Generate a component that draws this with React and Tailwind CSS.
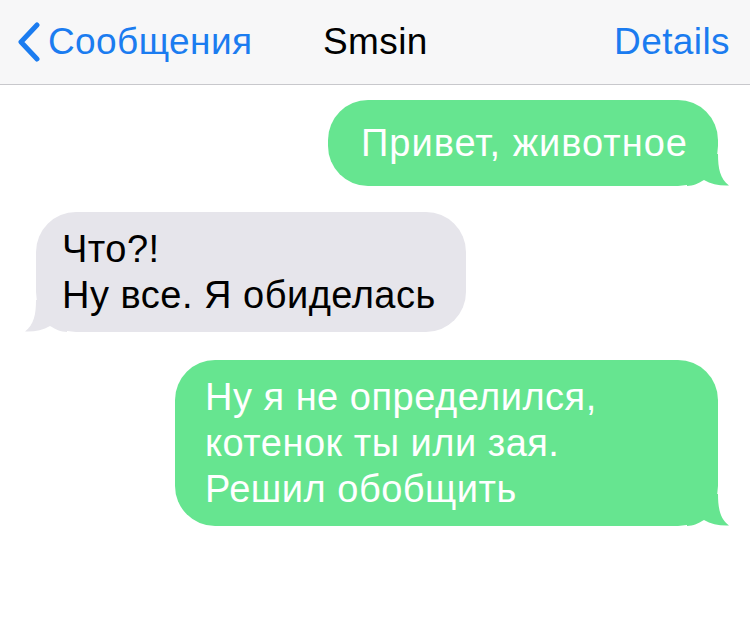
import * as React from "react";

const GREEN = "#66e590";
const GRAY = "#e6e5eb";

// tail of a bubble, drawn under the text at its bottom corner
const Tail = ({ side, color }) => (
  <svg
    width="42"
    height="32"
    viewBox="0 0 42 32"
    className={side === "right" ? "absolute -right-[11px] bottom-0" : "absolute -left-[11px] bottom-0 -scale-x-100"}
  >
    <path
      d="M0 0 H31 C31 14 33 25 42 31.5 C33 32 24 30 17 26 C12 29 6 32 0 32 Z"
      fill={color}
    />
  </svg>
);

const Bubble = ({ side, children, className }) => {
  const mine = side === "right";
  return (
    <div
      className={
        "relative rounded-[40px] text-[38px] leading-[46px] " +
        (mine ? "bg-[#66e590] text-white " : "bg-[#e6e5eb] text-black ") +
        className
      }
    >
      <Tail side={side} color={mine ? GREEN : GRAY} />
      <div className="relative">{children}</div>
    </div>
  );
};

export default function App() {
  return (
    <div
      className="w-[750px] h-[631px] bg-white overflow-hidden"
      style={{ fontFamily: '"Liberation Sans", Arial, sans-serif' }}
    >
      {/* nav bar */}
      <div className="h-[85px] bg-[#f7f7f8] border-b border-[#c8c8cc] flex items-center px-[15px] text-[37px] tracking-[0.4px]">
        <div className="flex items-center text-[#1b7cf0] w-[300px]">
          <svg width="27" height="40" viewBox="0 0 27 40" className="mr-[6px]">
            <path d="M22 3 L6 20 L22 37" fill="none" stroke="#1b7cf0" strokeWidth="5" strokeLinecap="round" strokeLinejoin="round" />
          </svg>
          <span>Сообщения</span>
        </div>
        <div className="text-black ml-[8px]">Smsin</div>
        <div className="ml-auto text-[#1b7cf0] pr-[5px]">Details</div>
      </div>

      {/* messages */}
      <div className="flex flex-col pt-[15px] px-[32px]">
        <div className="flex justify-end">
          <Bubble side="right" className="py-[20px] pl-[33px] pr-[30px] tracking-[1px]">
            Привет, животное
          </Bubble>
        </div>
        <div className="flex justify-start mt-[26px] pl-[4px]">
          <Bubble side="left" className="py-[14px] pl-[26px] pr-[30px] tracking-[0.5px]">
            Что?!
            <br />
            Ну все. Я обиделась
          </Bubble>
        </div>
        <div className="flex justify-end mt-[28px]">
          <Bubble side="right" className="py-[14px] pl-[30px] w-[543px] tracking-[0.5px]">
            Ну я не определился,
            <br />
            котенок ты или зая.
            <br />
            Решил обобщить
          </Bubble>
        </div>
      </div>
    </div>
  );
}
